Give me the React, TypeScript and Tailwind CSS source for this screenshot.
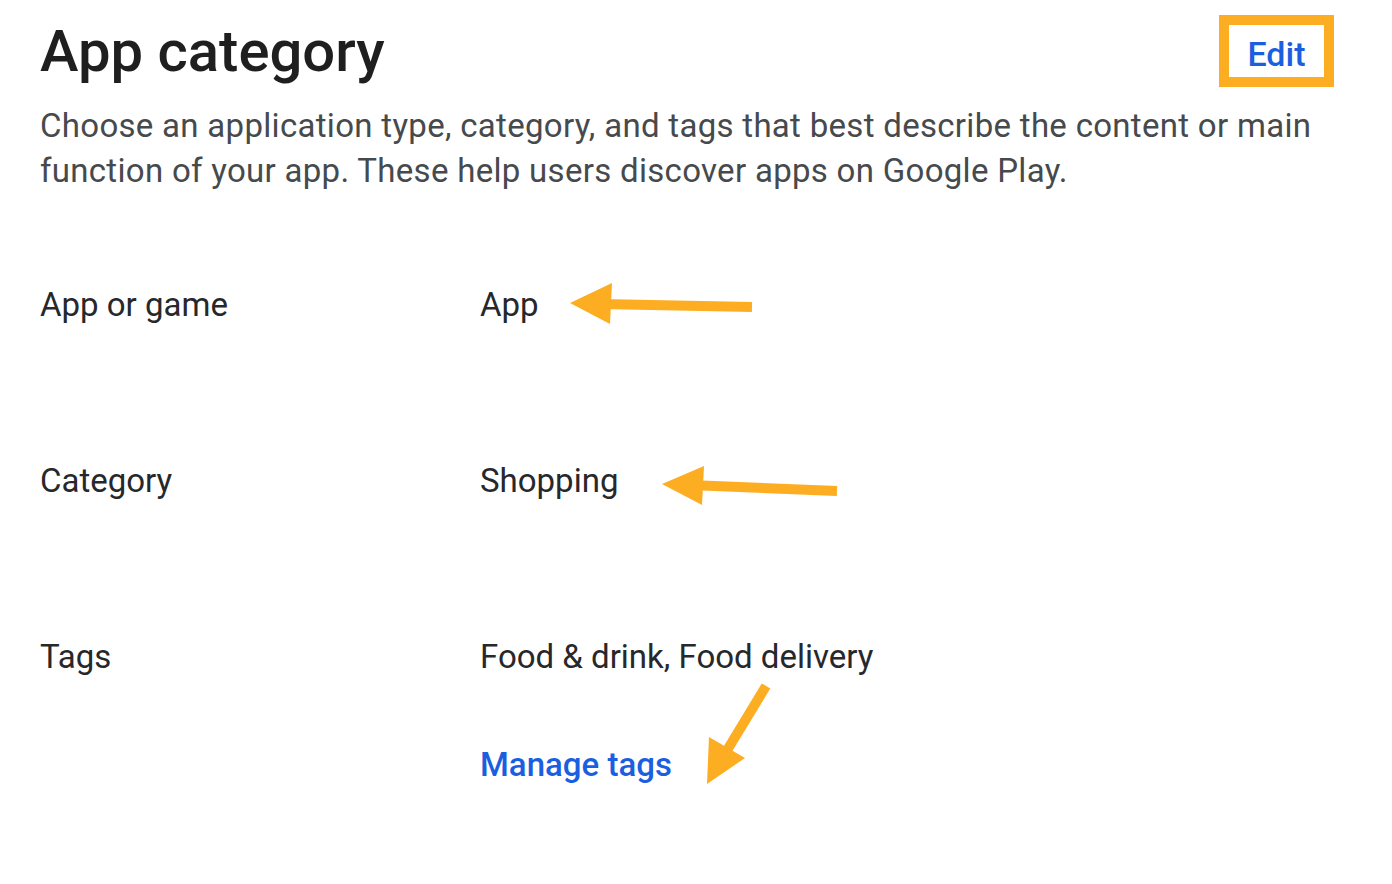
import React from "react";

const rows = [
  { label: "App or game", value: "App" },
  { label: "Category", value: "Shopping" },
  { label: "Tags", value: "Food & drink, Food delivery", link: "Manage tags" },
];

function Arrows() {
  return (
    <svg
      className="pointer-events-none absolute inset-0"
      width="1392"
      height="884"
      viewBox="0 0 1392 884"
    >
      <g fill="#FDAD22" stroke="#FDAD22">
        {/* App */}
        <line x1="752" y1="307" x2="600" y2="304" strokeWidth="10" />
        <polygon points="570,303 612,283 610,324" stroke="none" />
        {/* Shopping */}
        <line x1="837" y1="491" x2="690" y2="485" strokeWidth="10" />
        <polygon points="662,484 704,466 702,505" stroke="none" />
        {/* Manage tags */}
        <line x1="766" y1="686" x2="726" y2="752" strokeWidth="10" />
        <polygon points="707,784 709,737 745,758" stroke="none" />
      </g>
    </svg>
  );
}

export default function App() {
  return (
    <div
      className="relative h-[884px] w-[1392px] overflow-hidden bg-white"
      style={{ fontFamily: "Roboto, 'Noto Sans', sans-serif" }}
    >
      <div className="px-10 pt-[17px]">
        <header className="flex items-start justify-between">
          <h1 className="text-[58px] leading-[68px] font-medium text-[#1f1f1f]">
            App category
          </h1>
          <button className="mt-[-2px] mr-[18px] h-[72px] w-[115px] border-[10px] border-[#FDAD22] pt-[4px] text-[34px] font-medium text-[#1b5fe0]">
            Edit
          </button>
        </header>
        <p className="mt-[16px] text-[33px] leading-[45px] tracking-[0.3px] text-[#474a4d]">
          Choose an application type, category, and tags that best describe the content or main
          function of your app. These help users discover apps on Google Play.
        </p>

        <div className="mt-[92px] flex flex-col gap-[136px]">
          {rows.map((row) => (
            <div key={row.label} className="grid grid-cols-[440px_1fr] text-[33px] leading-[40px] text-[#26282b]">
              <div>{row.label}</div>
              <div className="flex flex-col">
                <span>{row.value}</span>
                {row.link && (
                  <a className="mt-[68px] font-medium text-[#1b5fe0]">{row.link}</a>
                )}
              </div>
            </div>
          ))}
        </div>
      </div>
      <Arrows />
    </div>
  );
}
